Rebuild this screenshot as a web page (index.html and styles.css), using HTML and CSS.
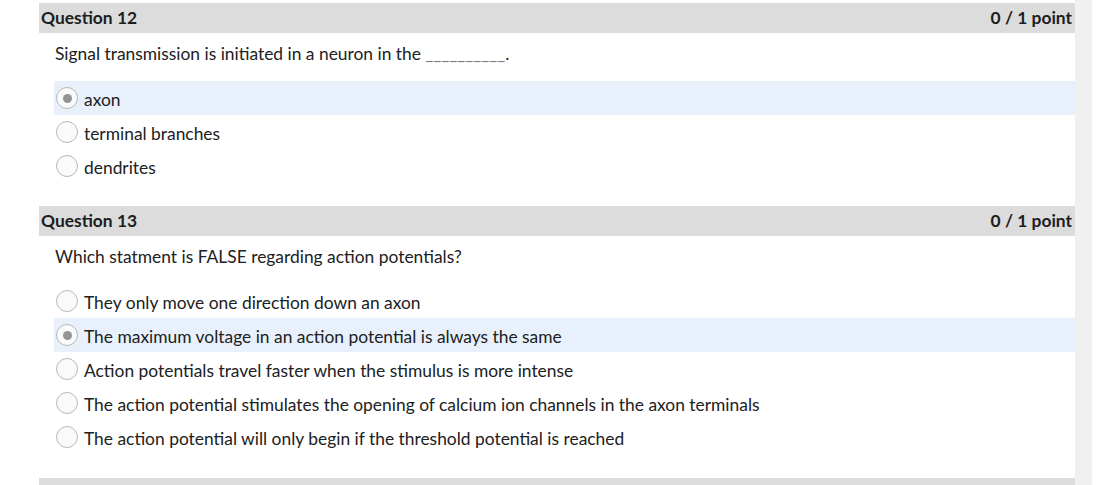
FILE: index.html
```html
<!DOCTYPE html>
<html>
<head>
<meta charset="utf-8">
<link rel="stylesheet" href="styles.css">
</head>
<body>
<div class="page">
  <div class="main">
    <section class="question">
      <div class="qhead"><span class="qtitle">Question 12</span><span class="qpoints">0 / 1 point</span></div>
      <div class="qtext">Signal transmission is initiated in a neuron in the <span class="blank">__________</span>.</div>
      <ul class="options">
        <li class="opt selected"><span class="radio"><span class="dot"></span></span><span class="label">axon</span></li>
        <li class="opt"><span class="radio"></span><span class="label">terminal branches</span></li>
        <li class="opt"><span class="radio"></span><span class="label">dendrites</span></li>
      </ul>
    </section>
    <section class="question q2">
      <div class="qhead"><span class="qtitle">Question 13</span><span class="qpoints">0 / 1 point</span></div>
      <div class="qtext">Which statment is FALSE regarding action potentials?</div>
      <ul class="options">
        <li class="opt"><span class="radio"></span><span class="label">They only move one direction down an axon</span></li>
        <li class="opt selected"><span class="radio"><span class="dot"></span></span><span class="label">The maximum voltage in an action potential is always the same</span></li>
        <li class="opt"><span class="radio"></span><span class="label">Action potentials travel faster when the stimulus is more intense</span></li>
        <li class="opt"><span class="radio"></span><span class="label">The action potential stimulates the opening of calcium ion channels in the axon terminals</span></li>
        <li class="opt"><span class="radio"></span><span class="label">The action potential will only begin if the threshold potential is reached</span></li>
      </ul>
    </section>
    <div class="nextbar"></div>
  </div>
  <div class="side"></div>
</div>
</body>
</html>
```
FILE: styles.css
```css
html, body {
  margin: 0;
  padding: 0;
  background: #ffffff;
}
body {
  font-family: Lato, "Noto Sans", sans-serif;
  color: #202122;
  overflow: hidden;
  height: 485px;
}
.page {
  display: flex;
  height: 485px;
  padding-left: 39px;
}
.main {
  width: 1036px;
  display: flex;
  flex-direction: column;
}
.side {
  width: 17px;
  background: #f0f0f0;
}
.qhead {
  margin-top: 3px;
  height: 30px;
  background: #dcdcdc;
  display: flex;
  justify-content: space-between;
  align-items: center;
  padding: 0 3px 1px 2px;
  box-sizing: border-box;
  font-weight: bold;
  font-size: 17.4px;
  color: #1c1d1f;
}
.q2 .qhead {
  margin-top: 0;
}
.qtext {
  font-size: 17.4px;
  padding: 10px 0 0 16px;
  height: 38px;
  box-sizing: border-box;
}
.blank {
  color: #7a7a7a;
}
.options {
  list-style: none;
  margin: 0;
  padding: 10px 0 23px 15px;
}
.q2 .qtext {
  height: 37px;
}
.q2 .options {
  padding-top: 11px;
  padding-bottom: 24px;
}
.opt {
  height: 34px;
  display: flex;
  align-items: center;
  font-size: 17.4px;
}
.opt.selected {
  background: #e8f1fb;
}
.label {
  padding-top: 3px;
}
.radio {
  width: 20px;
  height: 20px;
  border: 1px solid #b8b8b8;
  border-radius: 50%;
  background: #f9fafb;
  margin-left: 2px;
  margin-right: 6px;
  display: flex;
  align-items: center;
  justify-content: center;
  flex: none;
}
.dot {
  width: 9px;
  height: 9px;
  border-radius: 50%;
  background: #949494;
}
.nextbar {
  margin-top: auto;
  height: 7px;
  background: #dcdcdc;
}
```
